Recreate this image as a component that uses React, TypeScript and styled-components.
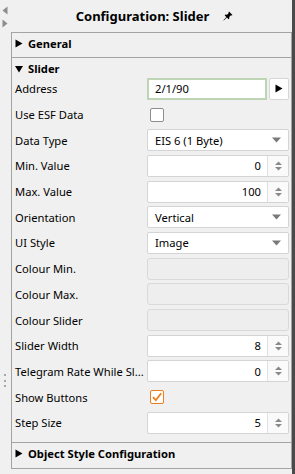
import React from 'react';
import styled, { createGlobalStyle } from 'styled-components';

const GlobalStyle = createGlobalStyle`
  html, body {
    margin: 0;
    padding: 0;
    background: #f0f0f0;
  }
  body {
    font-family: "Noto Sans", "Open Sans", sans-serif;
    font-size: 11.2px;
    color: #000;
  }
`;

type Field =
  | { kind: 'address'; label: string; value: string }
  | { kind: 'check'; label: string; checked: boolean }
  | { kind: 'select'; label: string; value: string }
  | { kind: 'spin'; label: string; value: string }
  | { kind: 'disabled'; label: string };

const fields: Field[] = [
  { kind: 'address', label: 'Address', value: '2/1/90' },
  { kind: 'check', label: 'Use ESF Data', checked: false },
  { kind: 'select', label: 'Data Type', value: 'EIS 6 (1 Byte)' },
  { kind: 'spin', label: 'Min. Value', value: '0' },
  { kind: 'spin', label: 'Max. Value', value: '100' },
  { kind: 'select', label: 'Orientation', value: 'Vertical' },
  { kind: 'select', label: 'UI Style', value: 'Image' },
  { kind: 'disabled', label: 'Colour Min.' },
  { kind: 'disabled', label: 'Colour Max.' },
  { kind: 'disabled', label: 'Colour Slider' },
  { kind: 'spin', label: 'Slider Width', value: '8' },
  { kind: 'spin', label: 'Telegram Rate While Sl...', value: '0' },
  { kind: 'check', label: 'Show Buttons', checked: true },
  { kind: 'spin', label: 'Step Size', value: '5' },
];

const PinIcon = () => (
  <svg width="10" height="10" viewBox="0 0 10 10">
    <path d="M6 0.5 L9.5 4 L8.6 4.6 L7.9 4.2 L6.2 5.9 L6.4 7.6 L5.6 8.3 L3.9 6.6 L0.8 9.6 L0.4 9.2 L3.4 6.1 L1.7 4.4 L2.4 3.6 L4.1 3.8 L5.8 2.1 L5.4 1.4 Z" fill="#000" />
  </svg>
);

const Spinner = () => (
  <svg width="9" height="12" viewBox="0 0 9 12">
    <path d="M1 5 L4.5 1.5 L8 5 Z" fill="#8a8a8a" />
    <path d="M1 7 L4.5 10.5 L8 7 Z" fill="#8a8a8a" />
  </svg>
);

const Check = () => (
  <svg width="12" height="12" viewBox="0 0 12 12">
    <path d="M2 6.2 L4.8 9.2 L10.2 2.2" stroke="#ee7d1c" strokeWidth="1.8" fill="none" />
  </svg>
);

const TriRight = () => (
  <svg width="8" height="9" viewBox="0 0 8 9">
    <path d="M0.5 0.5 L7.5 4.5 L0.5 8.5 Z" fill="#000" />
  </svg>
);

const TriDown = () => (
  <svg width="8" height="8" viewBox="0 0 8 8">
    <path d="M0 1 L8 1 L4 7.5 Z" fill="#000" />
  </svg>
);

function renderControl(f: Field) {
  switch (f.kind) {
    case 'address':
      return (
        <AddressWrap>
          <AddressInput>{f.value}</AddressInput>
          <ArrowButton>
            <TriRight />
          </ArrowButton>
        </AddressWrap>
      );
    case 'check':
      return (
        <CheckBox $checked={f.checked}>{f.checked && <Check />}</CheckBox>
      );
    case 'select':
      return (
        <SelectBox>
          <span>{f.value}</span>
          <svg width="9" height="6" viewBox="0 0 9 6">
            <path d="M0 0.5 L9 0.5 L4.5 5.5 Z" fill="#7a7a7a" />
          </svg>
        </SelectBox>
      );
    case 'spin':
      return (
        <SpinBox>
          <SpinValue>{f.value}</SpinValue>
          <SpinArrows>
            <Spinner />
          </SpinArrows>
        </SpinBox>
      );
    case 'disabled':
      return <DisabledBox />;
  }
}

export default function App() {
  return (
    <>
      <GlobalStyle />
      <Frame>
        <Gutter>
          <GutterArrow>
            <svg width="6" height="9" viewBox="0 0 6 9">
              <path d="M5.5 0.5 L0.5 4.5 L5.5 8.5 Z" fill="#8c8c8c" />
            </svg>
          </GutterArrow>
          <GutterArrow>
            <svg width="6" height="9" viewBox="0 0 6 9">
              <path d="M0.5 0.5 L5.5 4.5 L0.5 8.5 Z" fill="#8c8c8c" />
            </svg>
          </GutterArrow>
          <Grip>
            <Dot />
            <Dot />
            <Dot />
          </Grip>
        </Gutter>
        <Panel>
          <Header>
            <HeaderTitle>Configuration: Slider</HeaderTitle>
            <PinIcon />
          </Header>
          <Section>
            <SectionTitle>
              <Tri><TriRight /></Tri>General
            </SectionTitle>
          </Section>
          <Section $open>
            <SectionTitle>
              <Tri><TriDown /></Tri>Slider
            </SectionTitle>
            <Rows>
              {fields.map((f) => (
                <Row key={f.label}>
                  <Label>{f.label}</Label>
                  <Control>{renderControl(f)}</Control>
                </Row>
              ))}
            </Rows>
          </Section>
          <Section $last>
            <SectionTitle>
              <Tri><TriRight /></Tri>Object Style Configuration
            </SectionTitle>
          </Section>
        </Panel>
      </Frame>
    </>
  );
}

const Frame = styled.div`
  width: 295px;
  height: 474px;
  display: flex;
  overflow: hidden;
`;
const Gutter = styled.div`
  width: 11px;
  display: flex;
  flex-direction: column;
  align-items: center;
  padding-top: 6px;
  gap: 4px;
  box-sizing: border-box;
`;
const GutterArrow = styled.div`
  width: 6px;
  height: 9px;
  display: flex;
  margin-left: -2px;
`;
const Grip = styled.div`
  margin-top: 342px;
  display: flex;
  flex-direction: column;
  gap: 3.5px;
  margin-left: -2px;
`;
const Dot = styled.div`
  width: 2px;
  height: 2px;
  background: #a8a8a8;
`;
const Panel = styled.div`
  flex: 1;
  display: flex;
  flex-direction: column;
  border-right: 3px solid #4a4a4a;
`;
const Header = styled.div`
  height: 32px;
  display: flex;
  align-items: center;
  justify-content: center;
  gap: 14px;
  padding-left: 6px;
`;
const HeaderTitle = styled.div`
  font-weight: bold;
  font-size: 13px;
`;
const Section = styled.div<{ $open?: boolean; $last?: boolean }>`
  border: 1px solid #a3a3a3;
  border-bottom: ${(p) => (p.$last ? '1px solid #a3a3a3' : 'none')};
  height: ${(p) => (p.$open ? '385px' : p.$last ? '27px' : '25px')};
  box-sizing: border-box;
  padding-bottom: ${(p) => (p.$open ? '7px' : '0')};
`;
const SectionTitle = styled.div`
  height: 19px;
  padding-top: 1px;
  padding-left: 3px;
  display: flex;
  align-items: center;
  font-weight: bold;
  font-size: 11.2px;
`;
const Tri = styled.span`
  width: 13px;
  display: inline-flex;
  align-items: center;
`;
const Rows = styled.div`
  display: flex;
  flex-direction: column;
  margin-top: -2px;
`;
const Row = styled.div`
  height: 25.7px;
  display: flex;
  align-items: center;
`;
const Label = styled.div`
  width: 135px;
  padding-left: 3px;
  padding-right: 2px;
  box-sizing: border-box;
  white-space: nowrap;
  overflow: hidden;
`;
const Control = styled.div`
  width: 142px;
  height: 22px;
  display: flex;
  align-items: center;
`;
const AddressWrap = styled.div`
  display: flex;
  width: 100%;
  height: 100%;
  gap: 2px;
`;
const AddressInput = styled.div`
  flex: 1;
  border: 2px solid #bdd5b5;
  background: #fff;
  padding-left: 6px;
  display: flex;
  align-items: center;
  box-sizing: border-box;
`;
const ArrowButton = styled.div`
  width: 20px;
  border: 1px solid #d6d6d6;
  border-radius: 2px;
  background: #fff;
  display: flex;
  align-items: center;
  justify-content: center;
  box-sizing: border-box;
`;
const CheckBox = styled.div<{ $checked: boolean }>`
  width: 14px;
  height: 14px;
  margin-left: 3px;
  border: 1px solid ${(p) => (p.$checked ? '#ee7d1c' : '#8e8e8e')};
  border-radius: 2px;
  background: #fff;
  box-sizing: border-box;
  display: flex;
  align-items: center;
  justify-content: center;
`;
const SelectBox = styled.div`
  width: 100%;
  height: 100%;
  border: 1px solid #d4d4d4;
  border-radius: 2px;
  background: #fff;
  box-sizing: border-box;
  display: flex;
  align-items: center;
  justify-content: space-between;
  padding-left: 7px;
  padding-right: 7px;
`;
const SpinBox = styled.div`
  width: 100%;
  height: 100%;
  border: 1px solid #d4d4d4;
  border-radius: 2px;
  background: #fff;
  box-sizing: border-box;
  display: flex;
`;
const SpinValue = styled.div`
  flex: 1;
  display: flex;
  align-items: center;
  justify-content: flex-end;
  padding-right: 6px;
  border-right: 1px solid #e0e0e0;
`;
const SpinArrows = styled.div`
  width: 20px;
  display: flex;
  align-items: center;
  justify-content: center;
  background: #fafafa;
`;
const DisabledBox = styled.div`
  width: 100%;
  height: 100%;
  border: 1px solid #d9d9d9;
  border-radius: 3px;
  background: #eeeeee;
  box-sizing: border-box;
`;
